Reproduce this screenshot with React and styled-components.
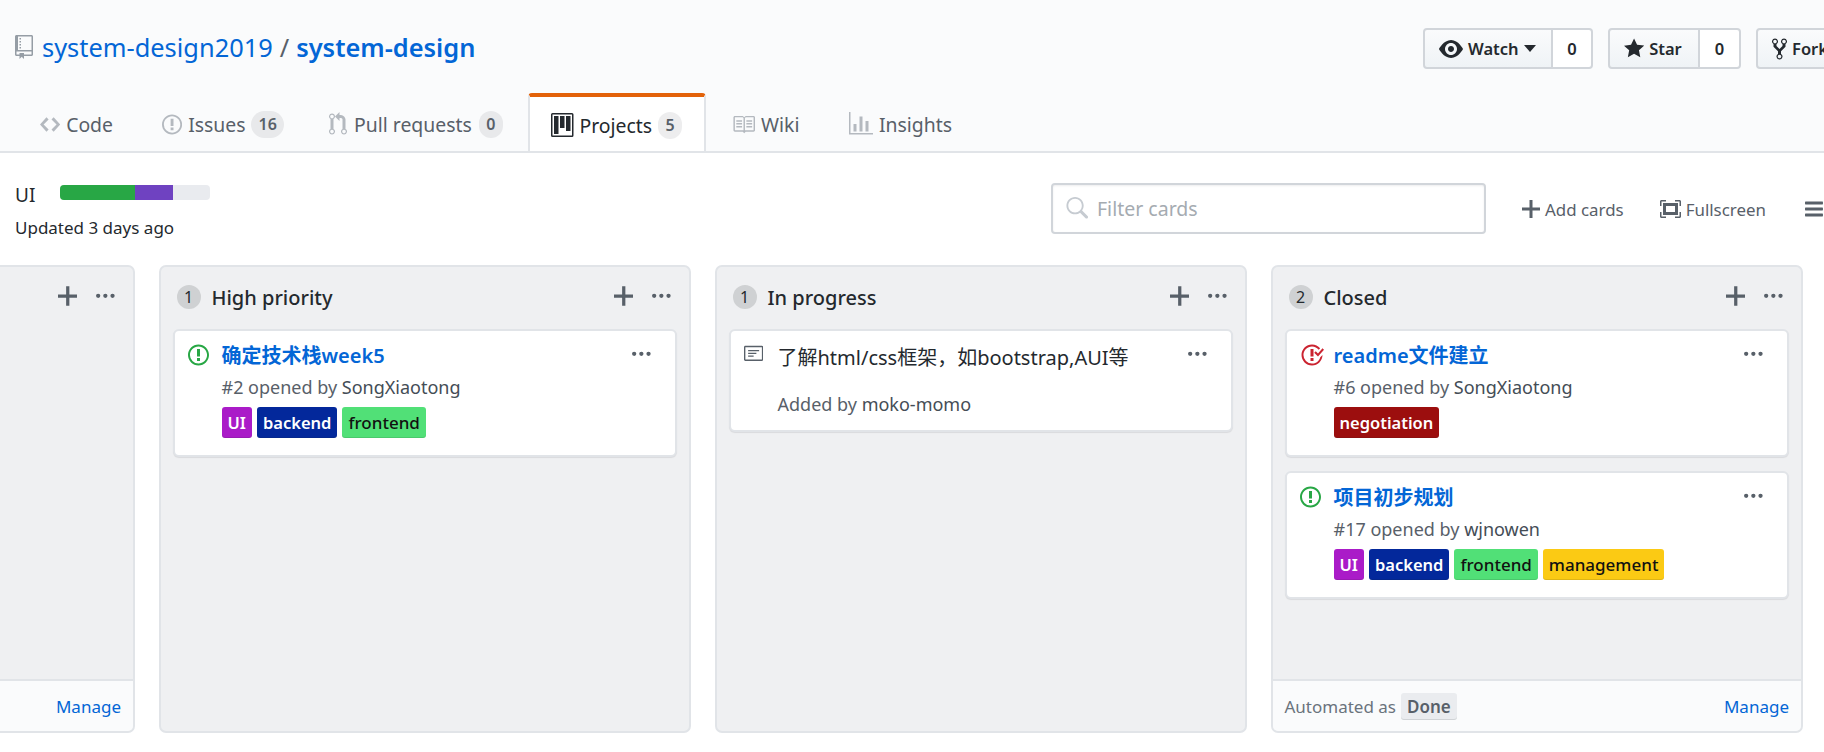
import React from "react";
import styled, { createGlobalStyle } from "styled-components";

const FONT = `"Noto Sans", "Noto Sans CJK SC", sans-serif`;

const Global = createGlobalStyle`
  html, body { margin: 0; padding: 0; background: #fff; overflow: hidden; }
  * { box-sizing: border-box; }
  body { font-family: ${FONT}; color: #24292e; }
`;

const P = {
  repo: [12, "M4 9H3V8h1v1zm0-3H3v1h1V6zm0-2H3v1h1V4zm0-2H3v1h1V2zm8-1v12c0 .55-.45 1-1 1H6v2l-1.5-1.5L3 16v-2H1c-.55 0-1-.45-1-1V1c0-.55.45-1 1-1h10c.55 0 1 .45 1 1zm-1 10H1v2h2v-1h3v1h5v-2zm0-10H2v9h9V1z"],
  code: [14, "M9.5 3L8 4.5 11.5 8 8 11.5 9.5 13 14 8 9.5 3zm-5 0L0 8l4.5 5L6 11.5 2.5 8 6 4.5 4.5 3z"],
  issue: [14, "M7 2.3c3.14 0 5.7 2.56 5.7 5.7s-2.56 5.7-5.7 5.7A5.71 5.71 0 0 1 1.3 8c0-3.14 2.56-5.7 5.7-5.7zM7 1C3.14 1 0 4.14 0 8s3.14 7 7 7 7-3.14 7-7-3.14-7-7-7zm1 3H6v5h2V4zm0 6H6v2h2v-2z"],
  closed: [16, "M7 10h2v2H7v-2zm2-6H7v5h2V4zm1.5 1.5l-1 1L12 9l4-4.5-1-1L12 7l-1.5-1.5zM8 13.7A5.71 5.71 0 0 1 2.3 8c0-3.14 2.56-5.7 5.7-5.7 1.83 0 3.45.88 4.5 2.2l.92-.92A6.947 6.947 0 0 0 8 1C4.14 1 1 4.14 1 8s3.14 7 7 7 7-3.14 7-7l-1.5 1.5c-.56 2.38-2.71 4.2-5 4.2z"],
  pull: [12, "M11 11.28V5c-.03-.78-.34-1.47-.94-2.06C9.46 2.35 8.78 2.03 8 2H7V0L4 3l3 3V4h1c.27.02.48.11.69.31.21.2.3.42.31.69v6.28A1.993 1.993 0 0 0 10 15a1.993 1.993 0 0 0 1-3.72zm-1 2.92c-.66 0-1.2-.55-1.2-1.2 0-.65.55-1.2 1.2-1.2.65 0 1.2.55 1.2 1.2 0 .65-.55 1.2-1.2 1.2zM4 3c0-1.11-.89-2-2-2a1.993 1.993 0 0 0-1 3.72v6.56A1.993 1.993 0 0 0 2 15a1.993 1.993 0 0 0 1-3.72V4.72c.59-.34 1-.98 1-1.72zm-.8 10c0 .66-.55 1.2-1.2 1.2-.65 0-1.2-.55-1.2-1.2 0-.65.55-1.2 1.2-1.2.65 0 1.2.55 1.2 1.2zM2 4.2C1.34 4.2.8 3.65.8 3c0-.65.55-1.2 1.2-1.2.65 0 1.2.55 1.2 1.2 0 .65-.55 1.2-1.2 1.2z"],
  project: [15, "M10 12h3V2h-3v10zm-4-2h3V2H6v8zm-4 4h3V2H2v12zm-1 1h13V1H1v14zM14 0H1a1 1 0 0 0-1 1v14a1 1 0 0 0 1 1h13a1 1 0 0 0 1-1V1a1 1 0 0 0-1-1z"],
  book: [16, "M3 5h4v1H3V5zm0 3h4V7H3v1zm0 2h4V9H3v1zm11-5h-4v1h4V5zm0 2h-4v1h4V7zm0 2h-4v1h4V9zm2-6v9c0 .55-.45 1-1 1H9.5l-1 1-1-1H2c-.55 0-1-.45-1-1V3c0-.55.45-1 1-1h5.5l1 1 1-1H15c.55 0 1 .45 1 1zm-8 .5L7.5 3H2v9h6V3.5zm7-.5H9.5l-.5.5V12h6V3z"],
  graph: [16, "M16 14v1H0V0h1v14h15zM5 13H3V8h2v5zm4 0H7V3h2v10zm4 0h-2V6h2v7z"],
  eye: [16, "M8.06 2C3 2 0 8 0 8s3 6 8.06 6C13 14 16 8 16 8s-3-6-7.94-6zM8 12c-2.2 0-4-1.78-4-4 0-2.2 1.8-4 4-4 2.22 0 4 1.8 4 4 0 2.22-1.78 4-4 4zm2-4c0 1.11-.89 2-2 2-1.11 0-2-.89-2-2 0-1.11.89-2 2-2 1.11 0 2 .89 2 2z"],
  star: [14, "M14 6l-4.9-.64L7 1 4.9 5.36 0 6l3.6 3.26L2.67 14 7 11.67 11.33 14l-.93-4.74L14 6z"],
  fork: [10, "M8 1a1.993 1.993 0 0 0-1 3.72V6L5 8 3 6V4.72A1.993 1.993 0 0 0 2 1a1.993 1.993 0 0 0-1 3.72V6.5l3 3v1.78A1.993 1.993 0 0 0 5 15a1.993 1.993 0 0 0 1-3.72V9.5l3-3V4.72A1.993 1.993 0 0 0 8 1zM2 4.2C1.34 4.2.8 3.65.8 3c0-.65.55-1.2 1.2-1.2.65 0 1.2.55 1.2 1.2 0 .65-.55 1.2-1.2 1.2zm3 10c-.66 0-1.2-.55-1.2-1.2 0-.65.55-1.2 1.2-1.2.65 0 1.2.55 1.2 1.2 0 .65-.55 1.2-1.2 1.2zm3-10c-.66 0-1.2-.55-1.2-1.2 0-.65.55-1.2 1.2-1.2.65 0 1.2.55 1.2 1.2 0 .65-.55 1.2-1.2 1.2z"],
  plus: [12, "M12 9H7v5H5V9H0V7h5V2h2v5h5v2z"],
  screen: [14, "M13 10h1v3c0 .547-.453 1-1 1h-3v-1h3v-3zM1 10H0v3c0 .547.453 1 1 1h3v-1H1v-3zm0-7h3V2H1c-.547 0-1 .453-1 1v3h1V3zm1 1h10v8H2V4zm2 6h6V6H4v4zm6-8v1h3v3h1V3c0-.547-.453-1-1-1h-3z"],
  bars: [12, "M11.41 9H.59C0 9 0 8.59 0 8c0-.59 0-1 .59-1H11.4c.59 0 .59.41.59 1 0 .59 0 1-.59 1h.01zm0-4H.59C0 5 0 4.59 0 4c0-.59 0-1 .59-1H11.4c.59 0 .59.41.59 1 0 .59 0 1-.59 1h.01zM.59 11H11.4c.59 0 .59.41.59 1 0 .59 0 1-.59 1H.59C0 13 0 12.59 0 12c0-.59 0-1 .59-1z"],
  kebab: [13, "M1.5 9a1.5 1.5 0 1 0 0-3 1.5 1.5 0 0 0 0 3zm5 0a1.5 1.5 0 1 0 0-3 1.5 1.5 0 0 0 0 3zM13 7.5a1.5 1.5 0 1 1-3 0 1.5 1.5 0 0 1 3 0z"],
  note: [14, "M3 10h4V9H3v1zm0-2h6V7H3v1zm0-2h8V5H3v1zm10 6H1V3h12v9zM1 2c-.55 0-1 .45-1 1v9c0 .55.45 1 1 1h12c.55 0 1-.45 1-1V3c0-.55-.45-1-1-1H1z"],
  search: [16, "M15.7 13.3l-3.81-3.83A5.93 5.93 0 0 0 13 6c0-3.31-2.69-6-6-6S1 2.69 1 6s2.69 6 6 6c1.3 0 2.48-.41 3.47-1.11l3.83 3.81c.19.2.45.3.7.3.25 0 .52-.09.7-.3a.996.996 0 0 0 0-1.41v.01zM7 10.7c-2.59 0-4.7-2.11-4.7-4.7 0-2.59 2.11-4.7 4.7-4.7 2.59 0 4.7 2.11 4.7 4.7 0 2.59-2.11 4.7-4.7 4.7z"],
};

const Svg = styled.svg`
  flex: none;
  display: block;
  fill: ${(p) => p.$color || "currentColor"};
`;
const Icon = ({ name, h = 20, color }) => {
  const [w, d] = P[name];
  return (
    <Svg $color={color} viewBox={`0 0 ${w} 16`} width={(w * h) / 16} height={h}>
      <path fillRule="evenodd" d={d} />
    </Svg>
  );
};

const Header = styled.header`
  height: 153px;
  background: #fafbfc;
  border-bottom: 2px solid #e1e4e8;
  overflow: hidden;
  display: flex;
  flex-direction: column;
`;
const TopRow = styled.div`
  height: 93px;
  flex: none;
  display: flex;
  padding-top: 28px;
`;
const RepoTitle = styled.h1`
  flex: 0 0 1423px;
  margin: 0;
  padding: 0 0 4px 15px;
  height: 41px;
  display: flex;
  align-items: center;
  font-size: 25.4px;
  font-weight: 400;
  color: #586069;
  svg { margin-right: 9px; }
`;
const RepoLink = styled.a`
  color: #0366d6;
  font-weight: ${(p) => (p.$strong ? 600 : 400)};
`;
const Slash = styled.span`
  margin: 0 7px;
`;
const Actions = styled.div`
  display: flex;
  gap: 15px;
  flex: none;
`;
const BtnGroup = styled.div`
  display: flex;
  height: 41px;
  font-size: 16.5px;
`;
const Btn = styled.div`
  display: flex;
  align-items: center;
  gap: 5px;
  padding: 0 0 0 14px;
  font-weight: 600;
  color: #24292e;
  background: linear-gradient(#fafbfc, #eff3f6);
  border: 2px solid #d1d5da;
  border-radius: 4px 0 0 4px;
  width: ${(p) => p.$w}px;
`;
const Caret = styled.span`
  width: 0;
  height: 0;
  border: 6.5px solid transparent;
  border-top: 7px solid #24292e;
  border-bottom: 0;
`;
const Count = styled.div`
  display: flex;
  align-items: center;
  justify-content: center;
  width: ${(p) => p.$w}px;
  background: #fff;
  font-weight: 600;
  border: 2px solid #d1d5da;
  border-left: 0;
  border-radius: 0 4px 4px 0;
`;
const Tabs = styled.nav`
  display: flex;
  height: 60px;
  align-items: flex-start;
`;
const Tab = styled.a`
  display: flex;
  align-items: center;
  gap: ${(p) => p.$gap || 6}px;
  height: ${(p) => (p.$active ? "60px" : "58px")};
  flex: none;
  width: ${(p) => p.$w}px;
  padding-left: ${(p) => p.$pl}px;
  padding-top: ${(p) => (p.$active ? 0 : 4)}px;
  font-size: 19.4px;
  color: ${(p) => (p.$active ? "#24292e" : "#586069")};
  svg { fill: ${(p) => (p.$active ? "#24292e" : "#b4b9bf")}; }
  ${(p) =>
    p.$active &&
    `
    background: #fff;
    border-left: 2px solid #e1e4e8;
    border-right: 2px solid #e1e4e8;
    border-top: 4px solid #e36209;
    border-radius: 4px 4px 0 0;
  `}
`;
const TabCount = styled.span`
  display: inline-block;
  padding: 0 7px;
  min-width: 24px;
  text-align: center;
  line-height: 27px;
  font-size: 16px;
  font-weight: 600;
  color: #586069;
  background: rgba(27, 31, 35, 0.08);
  border-radius: 14px;
`;

const ToolRow = styled.section`
  height: 112px;
  display: flex;
`;
const ProjectInfo = styled.div`
  flex: 0 0 1051px;
  padding: 29px 0 0 15px;
`;
const ProjectName = styled.div`
  display: flex;
  align-items: center;
  gap: 25px;
  font-size: 19px;
  line-height: 26px;
`;
const Progress = styled.div`
  display: flex;
  width: 150px;
  height: 15px;
  border-radius: 4px;
  overflow: hidden;
  background: #e9ebef;
  margin-top: -5px;
`;
const ProgressPart = styled.span`
  height: 100%;
  background: ${(p) => p.$c};
`;
const Updated = styled.div`
  margin-top: 9px;
  font-size: 17px;
  line-height: 22px;
  color: #24292e;
`;
const Filter = styled.div`
  flex: 0 0 435px;
  height: 51px;
  margin-top: 30px;
  display: flex;
  align-items: center;
  gap: 9px;
  padding-left: 12px;
  font-size: 19.5px;
  color: #a5abb1;
  border: 2px solid #d1d5da;
  border-radius: 4px;
  box-shadow: inset 0 1px 2px rgba(27, 31, 35, 0.075);
`;
const ToolLink = styled.a`
  display: flex;
  align-items: center;
  gap: 5px;
  margin-top: 31px;
  height: 50px;
  flex: none;
  font-size: 16.9px;
  color: #586069;
  margin-left: ${(p) => p.$ml}px;
`;

const Board = styled.main`
  display: flex;
  justify-content: flex-end;
  gap: 23.5px;
  padding-right: 21px;
  height: 468px;
  overflow: hidden;
`;
const Column = styled.section`
  flex: 0 0 532.5px;
  height: 468px;
  display: flex;
  flex-direction: column;
  background: #eff0f2;
  border: 2px solid #e1e4e8;
  border-radius: 7px;
  overflow: hidden;
`;
const ColHead = styled.div`
  display: flex;
  align-items: center;
  height: 60px;
  flex: none;
  padding: 0 18px 0 16px;
  font-size: 20px;
  font-weight: 500;
  color: #24292e;
`;
const ColCount = styled.span`
  width: 24px;
  height: 24px;
  border-radius: 50%;
  flex: none;
  margin-right: 11px;
  text-align: center;
  line-height: 24px;
  font-size: 16px;
  font-weight: 400;
  background: rgba(27, 31, 35, 0.15);
`;
const ColName = styled.span`
  flex: 1;
`;
const ColTools = styled.span`
  display: flex;
  align-items: center;
  gap: 19px;
  color: #586069;
  margin-top: -2px;
`;
const CardList = styled.div`
  flex: 1;
  display: flex;
  flex-direction: column;
  gap: 14px;
  padding: 2px 12px 0;
  min-height: 0;
`;
const Card = styled.article`
  position: relative;
  background: #fff;
  border: 2px solid #e1e4e8;
  border-radius: 6px;
  box-shadow: 0 1px 1px rgba(27, 31, 35, 0.1);
  display: flex;
  padding: 12px 12px 0 13px;
  height: ${(p) => p.$h}px;
  flex: none;
`;
const CardIcon = styled.div`
  width: ${(p) => p.$w}px;
  flex: none;
`;
const CardBody = styled.div`
  flex: 1;
  min-width: 0;
`;
const CardTitle = styled.a`
  display: block;
  font-size: 20px;
  line-height: 26px;
  font-weight: 600;
  color: #0366d6;
`;
const NoteTitle = styled.div`
  padding-top: 2px;
  font-size: 20px;
  line-height: 26px;
  color: #24292e;
`;
const Meta = styled.div`
  margin-top: ${(p) => p.$mt}px;
  font-size: 18px;
  line-height: 24px;
  color: #586069;
  b { font-weight: 400; color: #444d56; }
`;
const Labels = styled.div`
  display: flex;
  gap: 5px;
  margin-top: 8px;
`;
const Label = styled.span`
  height: 31px;
  padding: 0 6px;
  display: flex;
  align-items: center;
  font-size: ${(p) => (p.$dark ? 16.5 : 17)}px;
  font-weight: ${(p) => (p.$dark ? 600 : 500)};
  border-radius: 3px;
  color: ${(p) => (p.$dark ? "#fff" : "#111")};
  background: ${(p) => p.$bg};
  box-shadow: inset 0 -1px 0 rgba(27, 31, 35, 0.12);
`;
const Kebab = styled.span`
  position: absolute;
  top: 12px;
  right: 24px;
  color: #586069;
`;
const ColFoot = styled.div`
  height: 52px;
  flex: none;
  display: flex;
  align-items: center;
  padding: 0 12px;
  gap: 5px;
  background: #fafbfc;
  border-top: 2px solid #e1e4e8;
  font-size: 17px;
  color: #6a737d;
`;
const Done = styled.span`
  padding: 0 6px;
  line-height: 27px;
  font-weight: 600;
  color: #586069;
  background: #eaecef;
  border-radius: 3px;
  box-shadow: inset 0 -1px 0 rgba(27, 31, 35, 0.12);
`;
const Manage = styled.a`
  margin-left: auto;
  color: #0366d6;
`;

const ColumnHead = ({ count, name }) => (
  <ColHead>
    {count && <ColCount>{count}</ColCount>}
    <ColName>{name}</ColName>
    <ColTools>
      <Icon name="plus" h={26} color="#586069" />
      <Icon name="kebab" h={23} color="#586069" />
    </ColTools>
  </ColHead>
);

const CardKebab = () => (
  <Kebab>
    <Icon name="kebab" h={23} />
  </Kebab>
);

const LABELS = {
  UI: ["#aa1bc8", true],
  backend: ["#03289b", true],
  frontend: ["#51e077", false],
  management: ["#fbca14", false],
  negotiation: ["#9c0e0e", true],
};

const IssueCard = ({ icon, title, num, author, labels }) => (
  <Card $h={128}>
    <CardIcon $w={34}>
      {icon === "closed" ? (
        <Icon name="closed" h={24} color="#cb2431" />
      ) : (
        <Icon name="issue" h={24} color="#28a745" />
      )}
    </CardIcon>
    <CardBody>
      <CardTitle>{title}</CardTitle>
      <Meta $mt={6}>
        #{num} opened by <b>{author}</b>
      </Meta>
      <Labels>
        {labels.map((l) => (
          <Label key={l} $bg={LABELS[l][0]} $dark={LABELS[l][1]}>
            {l}
          </Label>
        ))}
      </Labels>
    </CardBody>
    <CardKebab />
  </Card>
);

const Footer = ({ auto }) => (
  <ColFoot>
    {auto && (
      <>
        Automated as <Done>Done</Done>
      </>
    )}
    <Manage>Manage</Manage>
  </ColFoot>
);

export default function App() {
  return (
    <>
      <Global />
      <Header>
        <TopRow>
          <RepoTitle>
            <Icon name="repo" h={24} color="#959da5" />
            <RepoLink>system-design2019</RepoLink>
            <Slash>/</Slash>
            <RepoLink $strong>system-design</RepoLink>
          </RepoTitle>
          <Actions>
            <BtnGroup>
              <Btn $w={130}>
                <Icon name="eye" h={24} />
                Watch
                <Caret />
              </Btn>
              <Count $w={40}>0</Count>
            </BtnGroup>
            <BtnGroup>
              <Btn $w={92}>
                <Icon name="star" h={23} />
                Star
              </Btn>
              <Count $w={41}>0</Count>
            </BtnGroup>
            <BtnGroup>
              <Btn $w={100}>
                <Icon name="fork" h={24} />
                Fork
              </Btn>
            </BtnGroup>
          </Actions>
        </TopRow>
        <Tabs>
          <Tab $w={140} $pl={40}>
            <Icon name="code" h={23} />
            Code
          </Tab>
          <Tab $w={167} $pl={22}>
            <Icon name="issue" h={23} />
            Issues <TabCount>16</TabCount>
          </Tab>
          <Tab $w={221} $pl={22} $gap={7}>
            <Icon name="pull" h={24} />
            Pull requests <TabCount>0</TabCount>
          </Tab>
          <Tab $active $w={178} $pl={21}>
            <Icon name="project" h={24} />
            Projects <TabCount>5</TabCount>
          </Tab>
          <Tab $w={121} $pl={26}>
            <Icon name="book" h={23} />
            Wiki
          </Tab>
          <Tab $w={150} $pl={22}>
            <Icon name="graph" h={24} />
            Insights
          </Tab>
        </Tabs>
      </Header>
      <ToolRow>
        <ProjectInfo>
          <ProjectName>
            UI
            <Progress>
              <ProgressPart style={{ width: "50%" }} $c="#28a745" />
              <ProgressPart style={{ width: "25%" }} $c="#6f42c1" />
            </Progress>
          </ProjectName>
          <Updated>Updated 3 days ago</Updated>
        </ProjectInfo>
        <Filter>
          <Icon name="search" h={23} color="#c6cbd1" />
          Filter cards
        </Filter>
        <ToolLink $ml={36}>
          <Icon name="plus" h={24} />
          Add cards
        </ToolLink>
        <ToolLink $ml={36}>
          <Icon name="screen" h={24} />
          Fullscreen
        </ToolLink>
        <ToolLink $ml={39}>
          <Icon name="bars" h={24} />
        </ToolLink>
      </ToolRow>
      <Board>
        <Column>
          <ColumnHead name="" />
          <CardList />
          <Footer />
        </Column>
        <Column>
          <ColumnHead count="1" name="High priority" />
          <CardList>
            <IssueCard icon="open" title="确定技术栈week5" num="2" author="SongXiaotong" labels={["UI", "backend", "frontend"]} />
          </CardList>
        </Column>
        <Column>
          <ColumnHead count="1" name="In progress" />
          <CardList>
            <Card $h={103}>
              <CardIcon $w={34}>
                <Icon name="note" h={22} color="#586069" />
              </CardIcon>
              <CardBody>
                <NoteTitle>了解html/css框架，如bootstrap,AUI等</NoteTitle>
                <Meta $mt={21}>
                  Added by <b>moko-momo</b>
                </Meta>
              </CardBody>
              <CardKebab />
            </Card>
          </CardList>
        </Column>
        <Column>
          <ColumnHead count="2" name="Closed" />
          <CardList>
            <IssueCard icon="closed" title="readme文件建立" num="6" author="SongXiaotong" labels={["negotiation"]} />
            <IssueCard icon="open" title="项目初步规划" num="17" author="wjnowen" labels={["UI", "backend", "frontend", "management"]} />
          </CardList>
          <Footer auto />
        </Column>
      </Board>
    </>
  );
}
